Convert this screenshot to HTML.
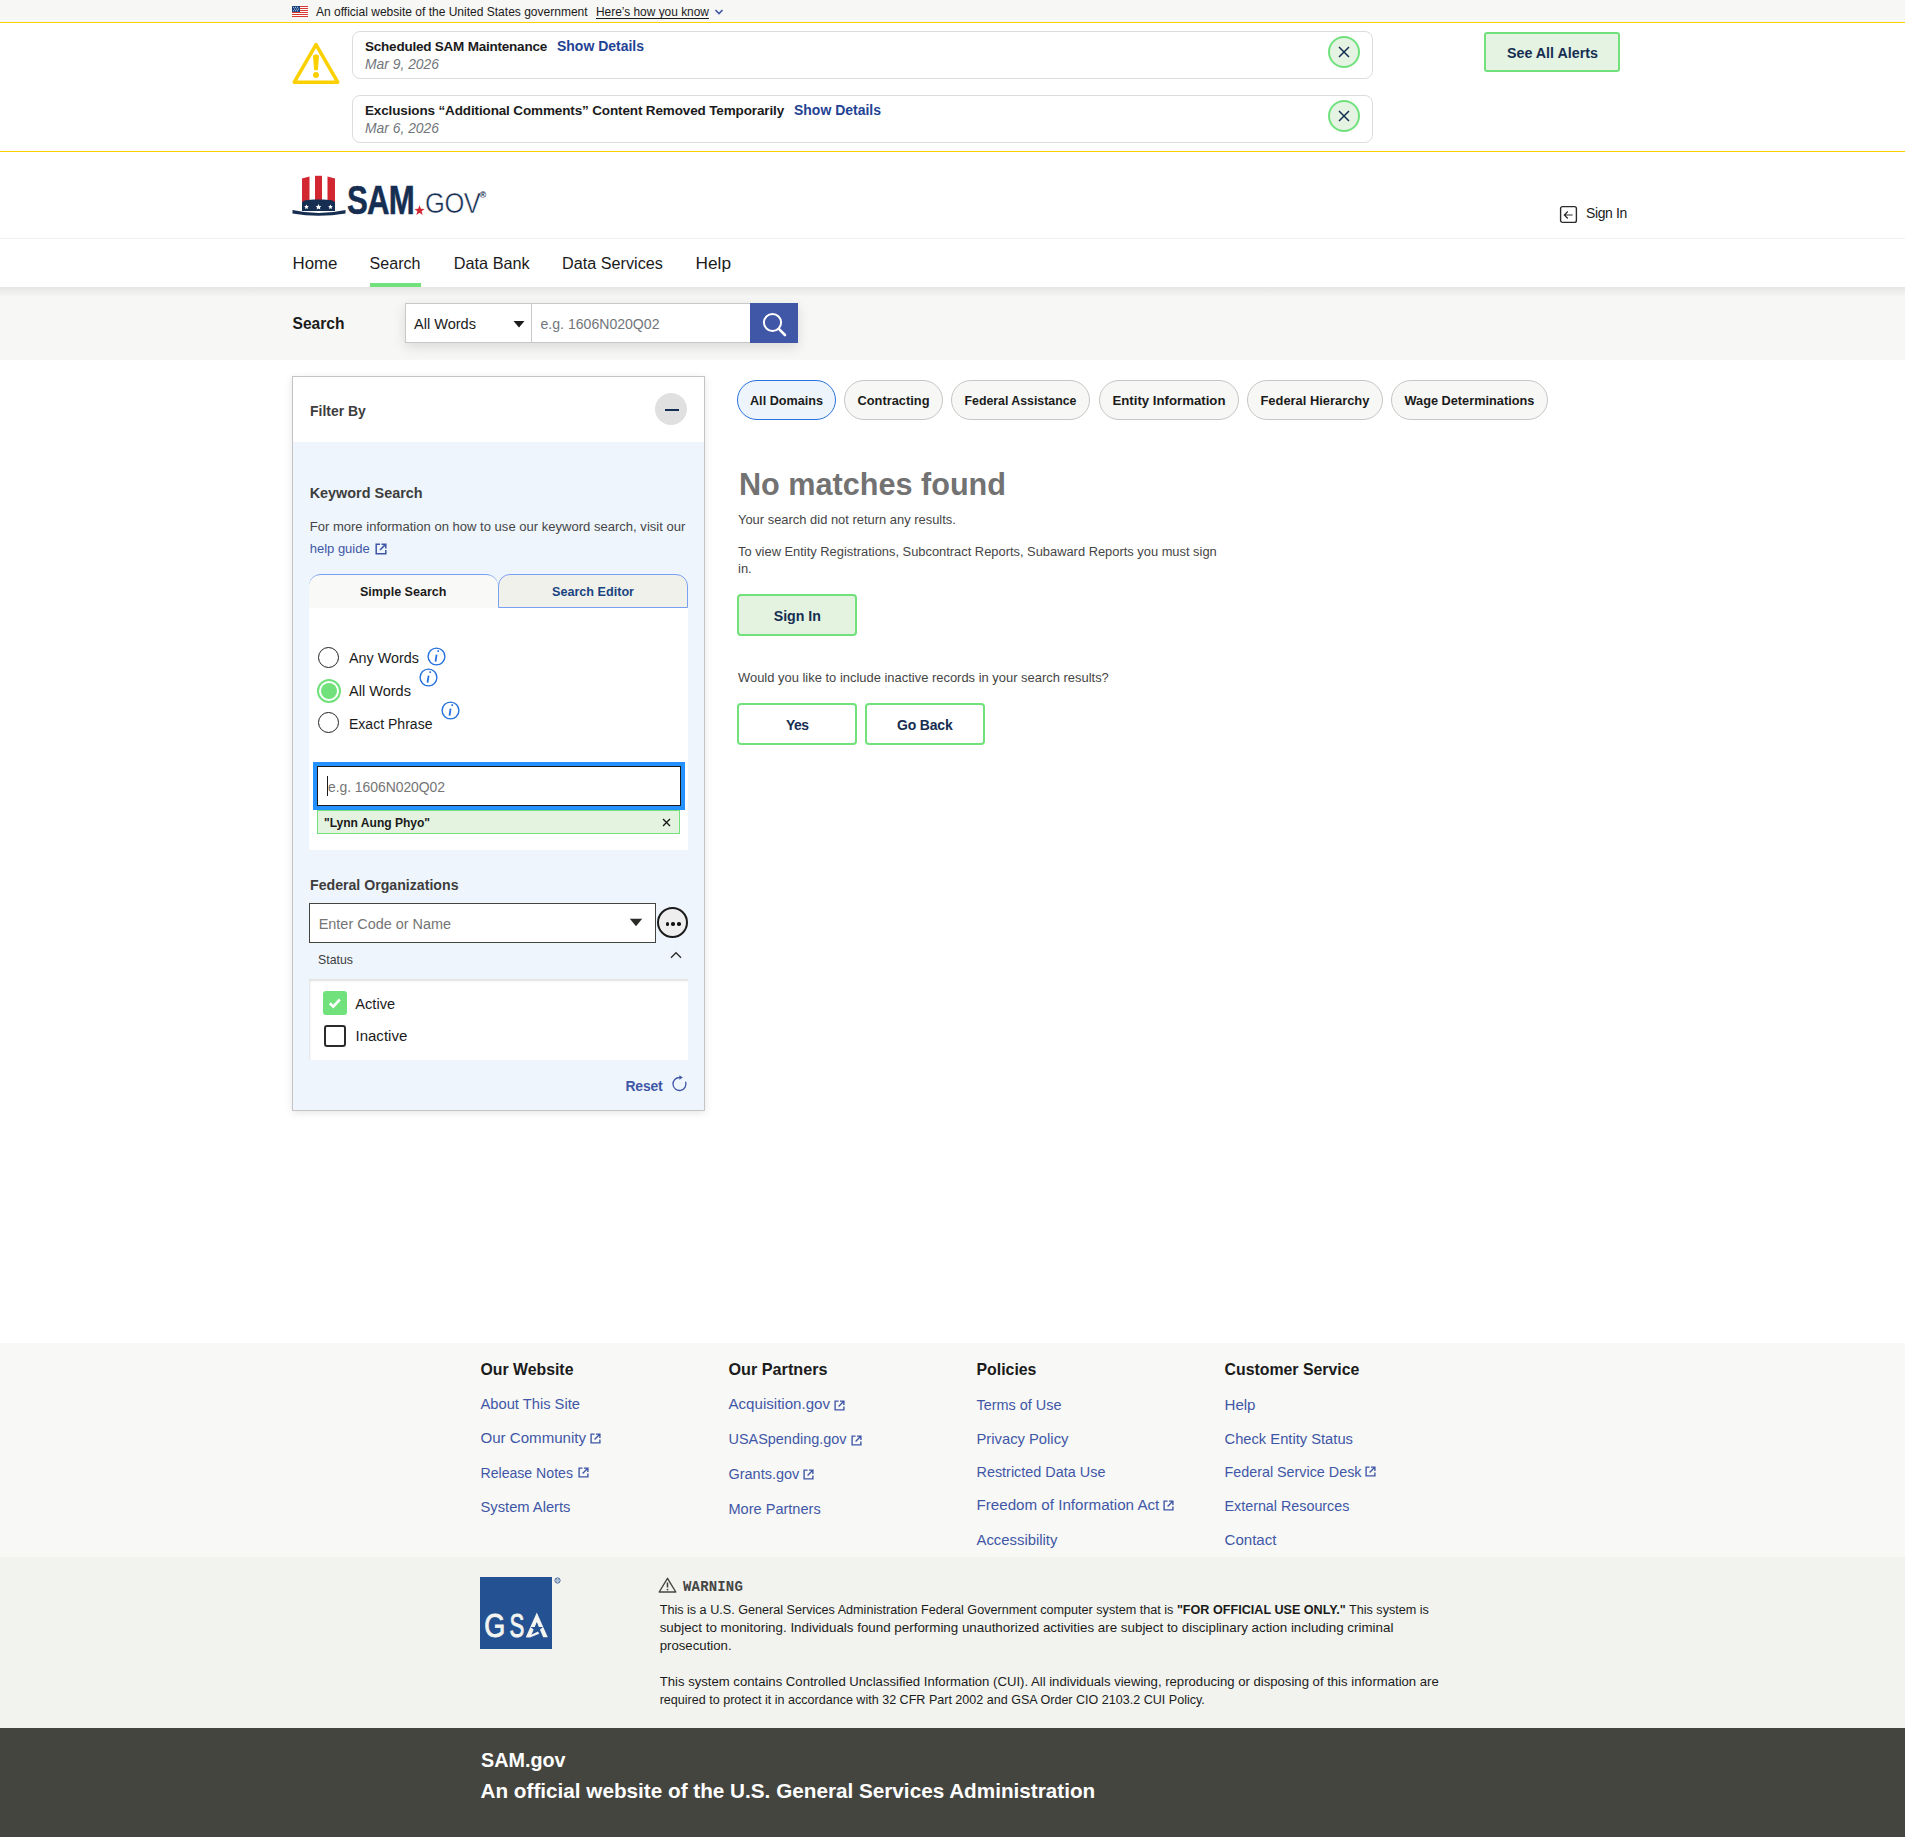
<!DOCTYPE html>
<html><head><meta charset="utf-8"><title>SAM.gov Search</title>
<style>
html,body{margin:0;padding:0;width:1905px;height:1837px;overflow:hidden;background:#fff}
body{position:relative;font-family:"Liberation Sans",sans-serif}
body>div,body>svg{position:absolute}
.t{white-space:nowrap}
b{font-weight:700}
</style></head><body>
<div style="left:0px;top:0px;width:1905px;height:22px;background:#f7f7f5"></div>
<div style="left:0px;top:22px;width:1905px;height:1px;background:#fad000"></div>
<div style="left:0px;top:151px;width:1905px;height:1px;background:#fad000"></div>
<div style="left:0px;top:238px;width:1905px;height:1px;background:#f0f0ec"></div>
<div style="left:0px;top:287px;width:1905px;height:73px;background:#f7f7f5"></div>
<div style="left:0px;top:287px;width:1905px;height:10px;background:linear-gradient(#e6e6e4,rgba(247,247,245,0))"></div>
<svg style="left:292px;top:6px" width="16" height="11" viewBox="0 0 16 11"><rect width="16" height="11" fill="#fff"/><g fill="#d83933"><rect y="0" width="16" height="1"/><rect y="2" width="16" height="1"/><rect y="4" width="16" height="1"/><rect y="6" width="16" height="1"/><rect y="8" width="16" height="1"/><rect y="10" width="16" height="1"/></g><rect width="8" height="6" fill="#1a4480"/><g fill="#fff"><circle cx="1.6" cy="1.3" r=".5"/><circle cx="3.6" cy="1.3" r=".5"/><circle cx="5.6" cy="1.3" r=".5"/><circle cx="2.6" cy="3" r=".5"/><circle cx="4.6" cy="3" r=".5"/><circle cx="6.4" cy="3" r=".5"/><circle cx="1.6" cy="4.7" r=".5"/><circle cx="3.6" cy="4.7" r=".5"/><circle cx="5.6" cy="4.7" r=".5"/></g></svg>
<svg style="left:714px;top:8px" width="10" height="8" viewBox="0 0 10 8"><path d="M1.5 2 5 5.5 8.5 2" fill="none" stroke="#3f57a6" stroke-width="1.6"/></svg>
<svg style="left:292px;top:42px" width="48" height="43" viewBox="0 0 48 43"><path d="M24 2.6 2.3 40.2h43.4z" fill="none" stroke="#fad000" stroke-width="3.5" stroke-linejoin="round"/><path d="M21.6 13.6q2.4-1.6 4.8 0l-.9 14.2h-3z" fill="#fad000" stroke="#fad000" stroke-width="1" stroke-linejoin="round"/><circle cx="24" cy="33.1" r="3" fill="#fad000"/></svg>
<div style="left:352px;top:31px;width:1019px;height:46px;border:1px solid #dcdcdc;border-radius:8px;background:#fff"></div>
<div style="left:1328px;top:36px;width:28px;height:28px;border:2px solid #70e17b;border-radius:50%;background:#e4f3e2"></div>
<svg style="left:1336px;top:44px" width="16" height="16" viewBox="0 0 16 16"><path d="M3 3 13 13M13 3 3 13" stroke="#162e51" stroke-width="1.5"/></svg>
<div style="left:352px;top:95px;width:1019px;height:46px;border:1px solid #dcdcdc;border-radius:8px;background:#fff"></div>
<div style="left:1328px;top:100px;width:28px;height:28px;border:2px solid #70e17b;border-radius:50%;background:#e4f3e2"></div>
<svg style="left:1336px;top:108px" width="16" height="16" viewBox="0 0 16 16"><path d="M3 3 13 13M13 3 3 13" stroke="#162e51" stroke-width="1.5"/></svg>
<div style="left:1484px;top:32px;width:132px;height:36px;border:2px solid #70e17b;border-radius:3px;background:#e4f3e2"></div>
<svg style="left:292px;top:175px" width="54" height="42" viewBox="0 0 54 42"><g fill="#d22630"><path d="M10 3.5 17.5 1.5V28H10z"/><path d="M23 0.8h7V28h-7z"/><path d="M35.5 1.5 43 3.5V28h-7.5z"/></g><path d="M10 28c0-2.5 4-3.5 16.5-3.5S43 25.5 43 28v8H10z" fill="#162e51"/><g fill="#fff"><path d="M14.5 29.6l.7 1.5 1.6.2-1.2 1.1.3 1.6-1.4-.8-1.4.8.3-1.6-1.2-1.1 1.6-.2z"/><path d="M26.5 29.1l.9 1.8 2 .3-1.5 1.4.4 2-1.8-1-1.8 1 .4-2-1.5-1.4 2-.3z"/><path d="M38.5 29.6l.7 1.5 1.6.2-1.2 1.1.3 1.6-1.4-.8-1.4.8.3-1.6-1.2-1.1 1.6-.2z"/></g><path d="M0.5 35Q26.5 41 53.5 35V38.5Q26.5 43 0.5 38.5Z" fill="#162e51"/></svg>
<div style="left:347px;top:180px;font:700 40px/40px 'Liberation Sans',sans-serif;color:#162e51;-webkit-text-stroke:.5px #162e51;transform:scaleX(.78);transform-origin:0 0;letter-spacing:-1px">SAM</div>
<svg style="left:414px;top:205px" width="11" height="11" viewBox="0 0 10 10"><path d="M5 .3l1.2 3.2 3.4.1-2.7 2.1 1 3.3L5 7.1 2.1 9l1-3.3L.4 3.6l3.4-.1z" fill="#d22630"/></svg>
<div style="left:425px;top:188px;font:400 29.5px/30px 'Liberation Sans',sans-serif;color:#162e51;-webkit-text-stroke:.5px #fff;transform:scaleX(.865);transform-origin:0 0;letter-spacing:-.5px">GOV</div>
<div style="left:479.5px;top:191px;font:700 9px/9px 'Liberation Sans',sans-serif;color:#162e51">®</div>
<svg style="left:1559px;top:205px" width="19" height="19" viewBox="0 0 19 19"><rect x="1.6" y="1.6" width="15.8" height="15.8" rx="2" fill="none" stroke="#2b2b2b" stroke-width="1.4"/><path d="M13.6 10H5.6M8.8 6.5 5.3 10 8.8 13.5" fill="none" stroke="#2b2b2b" stroke-width="1.2"/></svg>
<div style="left:370px;top:283px;width:51px;height:4px;background:#70e17b"></div>
<div style="left:405px;top:303px;width:393px;height:40px;box-shadow:0 4px 12px rgba(0,0,0,.12)"></div>
<div style="left:405px;top:303px;width:125px;height:38px;background:#fff;border:1px solid #c8c8c8"></div>
<div style="left:532px;top:303px;width:218px;height:38px;background:#fff;border:1px solid #c8c8c8;border-left:none"></div>
<svg style="left:513px;top:320px" width="12" height="8" viewBox="0 0 12 8"><path d="M.5 1h11L6 7.5z" fill="#1b1b1b"/></svg>
<div style="left:750px;top:303px;width:48px;height:40px;background:#4056a6"></div>
<svg style="left:762px;top:312px" width="26" height="26" viewBox="0 0 26 26"><circle cx="10.5" cy="10.5" r="8.6" fill="none" stroke="#fff" stroke-width="2"/><path d="M16.8 16.8 23 23" stroke="#fff" stroke-width="2.6" stroke-linecap="round"/></svg>
<div style="left:292px;top:376px;width:411px;height:733px;border:1px solid #c4c4c4;background:#eef5fc;box-shadow:0 2px 8px rgba(0,0,0,.10)"></div>
<div style="left:293px;top:377px;width:411px;height:65px;background:#fff"></div>
<div style="left:655px;top:393px;width:32px;height:32px;background:#e0e0e0;border-radius:50%"></div>
<div style="left:665px;top:408.5px;width:14px;height:2px;background:#162e51"></div>
<svg style="left:375px;top:543px" width="12" height="12" viewBox="0 0 12 12"><path d="M5 1.2H1.2v9.6h9.6V7" fill="none" stroke="#3f57a6" stroke-width="1.5"/><path d="M6.5 1.2h4.3v4.3M10.6 1.4 5 7" fill="none" stroke="#3f57a6" stroke-width="1.5"/></svg>
<div style="left:309px;top:574px;width:189px;height:34px;background:#f9f9f7;border-top:1px solid #7aa0f2;border-top-left-radius:12px;border-top-right-radius:12px"></div>
<div style="left:498px;top:574px;width:188px;height:32px;background:#f1f1ec;border:1px solid #7aa0f2;border-top-left-radius:12px;border-top-right-radius:12px"></div>
<div style="left:309px;top:608px;width:379px;height:242px;background:#fff"></div>
<div style="left:318px;top:647px;width:19.4px;height:19.4px;border:1.8px solid #222;border-radius:50%;background:#fff"></div>
<div style="left:317px;top:679px;width:20px;height:20px;border:2px solid #70e17b;border-radius:50%;background:#fff"></div>
<div style="left:321px;top:683px;width:16px;height:16px;border-radius:50%;background:#70e17b"></div>
<div style="left:318px;top:712px;width:19.4px;height:19.4px;border:1.8px solid #222;border-radius:50%;background:#fff"></div>
<svg style="left:426.5px;top:646.5px" width="19" height="19" viewBox="0 0 19 19"><circle cx="9.5" cy="9.5" r="8.4" fill="none" stroke="#2672de" stroke-width="1.4"/><path d="M10.4 4.2h1.6" stroke="#2672de" stroke-width="1.8"/><path d="M9.6 7.6 8.5 14.6" stroke="#2672de" stroke-width="1.8"/></svg>
<svg style="left:418.5px;top:667.5px" width="19" height="19" viewBox="0 0 19 19"><circle cx="9.5" cy="9.5" r="8.4" fill="none" stroke="#2672de" stroke-width="1.4"/><path d="M10.4 4.2h1.6" stroke="#2672de" stroke-width="1.8"/><path d="M9.6 7.6 8.5 14.6" stroke="#2672de" stroke-width="1.8"/></svg>
<svg style="left:440.5px;top:700.5px" width="19" height="19" viewBox="0 0 19 19"><circle cx="9.5" cy="9.5" r="8.4" fill="none" stroke="#2672de" stroke-width="1.4"/><path d="M10.4 4.2h1.6" stroke="#2672de" stroke-width="1.8"/><path d="M9.6 7.6 8.5 14.6" stroke="#2672de" stroke-width="1.8"/></svg>
<div style="left:313px;top:762px;width:372px;height:48px;background:#2491ff"></div>
<div style="left:317px;top:766px;width:362px;height:38px;background:#fff;border:1px solid #1b1b1b"></div>
<div style="left:327px;top:776px;width:1px;height:20px;background:#1b1b1b"></div>
<div style="left:317px;top:810px;width:361px;height:22px;background:#e3f3e0;border:1px solid #70e17b"></div>
<svg style="left:662px;top:818px" width="9" height="9" viewBox="0 0 9 9"><path d="M1 1 8 8M8 1 1 8" stroke="#1b1b1b" stroke-width="1.4"/></svg>
<div style="left:309px;top:903px;width:345px;height:38px;background:#fff;border:1px solid #454540"></div>
<svg style="left:629px;top:918px" width="14" height="9" viewBox="0 0 14 9"><path d="M.8 .8h12.4L7 8.3z" fill="#2b2b28"/></svg>
<div style="left:656.5px;top:907px;width:27px;height:27px;background:#eeeeee;border:2.2px solid #1b1b1b;border-radius:50%"></div>
<div style="left:665.6px;top:922.2px;width:3.6px;height:3.6px;background:#111;border-radius:50%"></div>
<div style="left:671.4000000000001px;top:922.2px;width:3.6px;height:3.6px;background:#111;border-radius:50%"></div>
<div style="left:677.2px;top:922.2px;width:3.6px;height:3.6px;background:#111;border-radius:50%"></div>
<svg style="left:670px;top:951px" width="12" height="8" viewBox="0 0 12 8"><path d="M1 6.8 6 1.7l5 5.1" fill="none" stroke="#2b2b2b" stroke-width="1.3"/></svg>
<div style="left:309px;top:979px;width:379px;height:81px;background:#fff;box-shadow:inset 1px 2px 2px rgba(0,0,0,.12)"></div>
<div style="left:323px;top:991px;width:24px;height:24px;background:#70e17b;border-radius:3px"></div>
<svg style="left:327px;top:995px" width="16" height="16" viewBox="0 0 16 16"><path d="M2.8 8.3 6.3 11.6 12.8 4.5" fill="none" stroke="#fff" stroke-width="2.6"/></svg>
<div style="left:324px;top:1025px;width:18px;height:18px;border:2px solid #2b2b2b;border-radius:3px;background:#fff"></div>
<svg style="left:671px;top:1075px" width="17" height="17" viewBox="0 0 17 17"><path d="M8.8 2.5A6.5 6.5 0 1 0 14.6 6.8" fill="none" stroke="#3f57a6" stroke-width="1.3"/><path d="M8.4 .2 11.8 2.5 8.4 4.8z" fill="#3f57a6"/></svg>
<div style="left:737px;top:380px;width:97px;height:38px;border:1px solid #2672de;border-radius:20px;background:#edf4fb"></div>
<div style="left:844px;top:380px;width:97px;height:38px;border:1px solid #c6c6c6;border-radius:20px;background:#f7f7f5"></div>
<div style="left:951px;top:380px;width:137px;height:38px;border:1px solid #c6c6c6;border-radius:20px;background:#f7f7f5"></div>
<div style="left:1099px;top:380px;width:138px;height:38px;border:1px solid #c6c6c6;border-radius:20px;background:#f7f7f5"></div>
<div style="left:1247px;top:380px;width:134px;height:38px;border:1px solid #c6c6c6;border-radius:20px;background:#f7f7f5"></div>
<div style="left:1391px;top:380px;width:155px;height:38px;border:1px solid #c6c6c6;border-radius:20px;background:#f7f7f5"></div>
<div style="left:737px;top:594px;width:116px;height:38px;border:2px solid #70e17b;border-radius:4px;background:#e3f3e0"></div>
<div style="left:737px;top:703px;width:116px;height:38px;border:2px solid #70e17b;border-radius:4px;background:#fff"></div>
<div style="left:865px;top:703px;width:116px;height:38px;border:2px solid #70e17b;border-radius:4px;background:#fff"></div>
<div style="left:0px;top:1343px;width:1905px;height:214px;background:#f8f8f6"></div>
<div style="left:0px;top:1557px;width:1905px;height:171px;background:#f2f3ee"></div>
<div style="left:0px;top:1728px;width:1905px;height:109px;background:#454540"></div>
<svg style="left:834.4px;top:1399.5px" width="11" height="11" viewBox="0 0 12 12"><path d="M5 1.2H1.2v9.6h9.6V7" fill="none" stroke="#3f57a6" stroke-width="1.5"/><path d="M6.5 1.2h4.3v4.3M10.6 1.4 5 7" fill="none" stroke="#3f57a6" stroke-width="1.5"/></svg>
<svg style="left:590px;top:1432.5px" width="11" height="11" viewBox="0 0 12 12"><path d="M5 1.2H1.2v9.6h9.6V7" fill="none" stroke="#3f57a6" stroke-width="1.5"/><path d="M6.5 1.2h4.3v4.3M10.6 1.4 5 7" fill="none" stroke="#3f57a6" stroke-width="1.5"/></svg>
<svg style="left:578px;top:1467px" width="11" height="11" viewBox="0 0 12 12"><path d="M5 1.2H1.2v9.6h9.6V7" fill="none" stroke="#3f57a6" stroke-width="1.5"/><path d="M6.5 1.2h4.3v4.3M10.6 1.4 5 7" fill="none" stroke="#3f57a6" stroke-width="1.5"/></svg>
<svg style="left:851px;top:1434.5px" width="11" height="11" viewBox="0 0 12 12"><path d="M5 1.2H1.2v9.6h9.6V7" fill="none" stroke="#3f57a6" stroke-width="1.5"/><path d="M6.5 1.2h4.3v4.3M10.6 1.4 5 7" fill="none" stroke="#3f57a6" stroke-width="1.5"/></svg>
<svg style="left:803.4px;top:1469px" width="11" height="11" viewBox="0 0 12 12"><path d="M5 1.2H1.2v9.6h9.6V7" fill="none" stroke="#3f57a6" stroke-width="1.5"/><path d="M6.5 1.2h4.3v4.3M10.6 1.4 5 7" fill="none" stroke="#3f57a6" stroke-width="1.5"/></svg>
<svg style="left:1163px;top:1500px" width="11" height="11" viewBox="0 0 12 12"><path d="M5 1.2H1.2v9.6h9.6V7" fill="none" stroke="#3f57a6" stroke-width="1.5"/><path d="M6.5 1.2h4.3v4.3M10.6 1.4 5 7" fill="none" stroke="#3f57a6" stroke-width="1.5"/></svg>
<svg style="left:1365px;top:1466px" width="11" height="11" viewBox="0 0 12 12"><path d="M5 1.2H1.2v9.6h9.6V7" fill="none" stroke="#3f57a6" stroke-width="1.5"/><path d="M6.5 1.2h4.3v4.3M10.6 1.4 5 7" fill="none" stroke="#3f57a6" stroke-width="1.5"/></svg>
<svg style="left:480px;top:1577px" width="72" height="72" viewBox="0 0 72 72"><rect width="72" height="72" fill="#245192"/><g fill="#f4f4f0" stroke="#f4f4f0" stroke-width="0.9" font-family="Liberation Sans" font-size="34"><text x="4.2" y="60.2" textLength="21" lengthAdjust="spacingAndGlyphs">G</text><text x="29.4" y="60.2" textLength="14.8" lengthAdjust="spacingAndGlyphs">S</text></g><path d="M56.8 35.6 67.8 60.2h-4.6L56.8 45.2 50.4 60.2h-4.6z" fill="#f4f4f0"/><path d="M56.8 45.6l1.6 4.3 4.6.2-3.6 2.8 1.3 4.4-3.9-2.5-3.9 2.5 1.3-4.4-3.6-2.8 4.6-.2z" fill="#245192"/><path d="M46 60.2 58 54.5l1.2 2.3-8.6 3.4z" fill="#f4f4f0"/></svg>
<svg style="left:554px;top:1577px" width="7" height="7" viewBox="0 0 7 7"><circle cx="3.5" cy="3.5" r="2.6" fill="none" stroke="#245192" stroke-width=".9"/><text x="3.5" y="5" font-size="4" text-anchor="middle" fill="#245192" font-family="Liberation Sans">R</text></svg>
<svg style="left:658px;top:1577px" width="19" height="16" viewBox="0 0 19 16"><path d="M9.5 1.3 1.2 15h16.6z" fill="none" stroke="#454545" stroke-width="1.4" stroke-linejoin="round"/><path d="M9.5 5.5v5" stroke="#454545" stroke-width="1.6"/><circle cx="9.5" cy="12.6" r=".9" fill="#454545"/></svg>
<div class="t" style="left:316px;top:6.00px;font-size:12.03px;line-height:12.03px;font-weight:400;color:#1b1b1b;">An official website of the United States government</div>
<div class="t" style="left:596px;top:7.01px;font-size:11.91px;line-height:11.91px;font-weight:400;color:#1b1b1b;text-decoration:underline;text-underline-offset:2px">Here’s how you know</div>
<div class="t" style="left:365px;top:40.00px;font-size:13.49px;line-height:13.49px;font-weight:700;color:#1b1b1b;letter-spacing:-0.213px;">Scheduled SAM Maintenance</div>
<div class="t" style="left:557px;top:39.01px;font-size:13.98px;line-height:13.98px;font-weight:700;color:#1f4394;">Show Details</div>
<div class="t" style="left:365px;top:57.50px;font-size:13.86px;line-height:13.86px;font-weight:400;color:#71767a;font-style:italic">Mar 9, 2026</div>
<div class="t" style="left:365px;top:104.00px;font-size:13.49px;line-height:13.49px;font-weight:700;color:#1b1b1b;letter-spacing:-0.13px;">Exclusions “Additional Comments” Content Removed Temporarily</div>
<div class="t" style="left:794px;top:103.01px;font-size:13.98px;line-height:13.98px;font-weight:700;color:#1f4394;">Show Details</div>
<div class="t" style="left:365px;top:121.50px;font-size:13.86px;line-height:13.86px;font-weight:400;color:#71767a;font-style:italic">Mar 6, 2026</div>
<div class="t" style="left:1507px;top:45.51px;font-size:14.28px;line-height:14.28px;font-weight:700;color:#162e51;">See All Alerts</div>
<div class="t" style="left:1586px;top:207.00px;font-size:13.95px;line-height:13.95px;font-weight:400;color:#1b1b1b;letter-spacing:-0.344px;">Sign In</div>
<div class="t" style="left:292.5px;top:256.00px;font-size:16.87px;line-height:16.87px;font-weight:400;color:#1b1b1b;">Home</div>
<div class="t" style="left:369.6px;top:255.00px;font-size:16.09px;line-height:16.09px;font-weight:400;color:#1b1b1b;">Search</div>
<div class="t" style="left:453.8px;top:255.01px;font-size:16.27px;line-height:16.27px;font-weight:400;color:#1b1b1b;">Data Bank</div>
<div class="t" style="left:562px;top:255.00px;font-size:16.22px;line-height:16.22px;font-weight:400;color:#1b1b1b;">Data Services</div>
<div class="t" style="left:695.5px;top:255.01px;font-size:17.26px;line-height:17.26px;font-weight:400;color:#1b1b1b;">Help</div>
<div class="t" style="left:292.5px;top:315.51px;font-size:15.59px;line-height:15.59px;font-weight:700;color:#1b1b1b;">Search</div>
<div class="t" style="left:414px;top:316.51px;font-size:14.55px;line-height:14.55px;font-weight:400;color:#1b1b1b;">All Words</div>
<div class="t" style="left:540.5px;top:316.50px;font-size:14.08px;line-height:14.08px;font-weight:400;color:#71767a;">e.g. 1606N020Q02</div>
<div class="t" style="left:310px;top:405.00px;font-size:13.95px;line-height:13.95px;font-weight:700;color:#3d3d3d;">Filter By</div>
<div class="t" style="left:309.7px;top:485.71px;font-size:14.42px;line-height:14.42px;font-weight:700;color:#3d3d3d;">Keyword Search</div>
<div class="t" style="left:309.7px;top:519.51px;font-size:13.06px;line-height:13.06px;font-weight:400;color:#454545;">For more information on how to use our keyword search, visit our</div>
<div class="t" style="left:309.7px;top:541.71px;font-size:13.0px;line-height:13.0px;font-weight:400;color:#3f57a6;">help guide</div>
<div class="t" style="left:360px;top:586.41px;font-size:12.55px;line-height:12.55px;font-weight:700;color:#1b1b1b;">Simple Search</div>
<div class="t" style="left:552px;top:585.80px;font-size:12.61px;line-height:12.61px;font-weight:700;color:#1a4480;">Search Editor</div>
<div class="t" style="left:349px;top:650.70px;font-size:14.37px;line-height:14.37px;font-weight:400;color:#1b1b1b;">Any Words</div>
<div class="t" style="left:349px;top:683.71px;font-size:14.55px;line-height:14.55px;font-weight:400;color:#1b1b1b;">All Words</div>
<div class="t" style="left:349px;top:716.70px;font-size:14.04px;line-height:14.04px;font-weight:400;color:#1b1b1b;">Exact Phrase</div>
<div class="t" style="left:328px;top:780.61px;font-size:13.95px;line-height:13.95px;font-weight:400;color:#757575;letter-spacing:-0.05px;">e.g. 1606N020Q02</div>
<div class="t" style="left:324px;top:817.00px;font-size:12.09px;line-height:12.09px;font-weight:700;color:#1b1b1b;letter-spacing:-0.032px;">&quot;Lynn Aung Phyo&quot;</div>
<div class="t" style="left:310px;top:878.01px;font-size:14.15px;line-height:14.15px;font-weight:700;color:#3d3d3d;">Federal Organizations</div>
<div class="t" style="left:318.7px;top:916.70px;font-size:14.45px;line-height:14.45px;font-weight:400;color:#757575;">Enter Code or Name</div>
<div class="t" style="left:318px;top:954.01px;font-size:12.34px;line-height:12.34px;font-weight:400;color:#3d3d3d;">Status</div>
<div class="t" style="left:355.3px;top:996.81px;font-size:14.61px;line-height:14.61px;font-weight:400;color:#1b1b1b;">Active</div>
<div class="t" style="left:355.5px;top:1027.60px;font-size:15.03px;line-height:15.03px;font-weight:400;color:#1b1b1b;">Inactive</div>
<div class="t" style="left:625.5px;top:1079.72px;font-size:13.95px;line-height:13.95px;font-weight:700;color:#3f57a6;letter-spacing:-0.194px;">Reset</div>
<div class="t" style="left:750.0px;top:394.60px;font-size:12.63px;line-height:12.63px;font-weight:700;color:#1b1b1b;">All Domains</div>
<div class="t" style="left:857.5px;top:394.61px;font-size:12.83px;line-height:12.83px;font-weight:700;color:#1b1b1b;">Contracting</div>
<div class="t" style="left:964.5px;top:394.61px;font-size:12.34px;line-height:12.34px;font-weight:700;color:#1b1b1b;">Federal Assistance</div>
<div class="t" style="left:1112.5px;top:393.61px;font-size:13.21px;line-height:13.21px;font-weight:700;color:#1b1b1b;">Entity Information</div>
<div class="t" style="left:1260.5px;top:394.61px;font-size:12.9px;line-height:12.9px;font-weight:700;color:#1b1b1b;">Federal Hierarchy</div>
<div class="t" style="left:1404.5px;top:394.60px;font-size:12.76px;line-height:12.76px;font-weight:700;color:#1b1b1b;">Wage Determinations</div>
<div class="t" style="left:739px;top:469.21px;font-size:30.61px;line-height:30.61px;font-weight:700;color:#727272;">No matches found</div>
<div class="t" style="left:738px;top:514.01px;font-size:12.93px;line-height:12.93px;font-weight:400;color:#454545;">Your search did not return any results.</div>
<div class="t" style="left:738px;top:545.81px;font-size:12.88px;line-height:12.88px;font-weight:400;color:#454545;">To view Entity Registrations, Subcontract Reports, Subaward Reports you must sign</div>
<div class="t" style="left:738px;top:562.40px;font-size:13px;line-height:13px;font-weight:400;color:#454545;">in.</div>
<div class="t" style="left:773.7px;top:609.00px;font-size:14.19px;line-height:14.19px;font-weight:700;color:#162e51;">Sign In</div>
<div class="t" style="left:738px;top:672.00px;font-size:12.94px;line-height:12.94px;font-weight:400;color:#454545;">Would you like to include inactive records in your search results?</div>
<div class="t" style="left:786px;top:718.61px;font-size:13.95px;line-height:13.95px;font-weight:700;color:#162e51;letter-spacing:-0.51px;">Yes</div>
<div class="t" style="left:897px;top:718.61px;font-size:13.95px;line-height:13.95px;font-weight:700;color:#162e51;letter-spacing:-0.15px;">Go Back</div>
<div class="t" style="left:480.5px;top:1362.01px;font-size:15.84px;line-height:15.84px;font-weight:700;color:#1b1b1b;">Our Website</div>
<div class="t" style="left:728.5px;top:1361.00px;font-size:16.19px;line-height:16.19px;font-weight:700;color:#1b1b1b;">Our Partners</div>
<div class="t" style="left:976.5px;top:1362.00px;font-size:15.87px;line-height:15.87px;font-weight:700;color:#1b1b1b;">Policies</div>
<div class="t" style="left:1224.5px;top:1362.00px;font-size:15.87px;line-height:15.87px;font-weight:700;color:#1b1b1b;">Customer Service</div>
<div class="t" style="left:480.5px;top:1397.00px;font-size:14.71px;line-height:14.71px;font-weight:400;color:#3f57a6;">About This Site</div>
<div class="t" style="left:480.5px;top:1430.02px;font-size:15.08px;line-height:15.08px;font-weight:400;color:#3f57a6;">Our Community</div>
<div class="t" style="left:480.5px;top:1465.61px;font-size:14.1px;line-height:14.1px;font-weight:400;color:#3f57a6;">Release Notes</div>
<div class="t" style="left:480.5px;top:1500.40px;font-size:14.72px;line-height:14.72px;font-weight:400;color:#3f57a6;">System Alerts</div>
<div class="t" style="left:728.5px;top:1395.61px;font-size:15.1px;line-height:15.1px;font-weight:400;color:#3f57a6;">Acquisition.gov</div>
<div class="t" style="left:728.5px;top:1431.90px;font-size:14.44px;line-height:14.44px;font-weight:400;color:#3f57a6;">USASpending.gov</div>
<div class="t" style="left:728.5px;top:1466.50px;font-size:14.47px;line-height:14.47px;font-weight:400;color:#3f57a6;">Grants.gov</div>
<div class="t" style="left:728.5px;top:1501.81px;font-size:14.55px;line-height:14.55px;font-weight:400;color:#3f57a6;">More Partners</div>
<div class="t" style="left:976.5px;top:1397.61px;font-size:14.43px;line-height:14.43px;font-weight:400;color:#3f57a6;">Terms of Use</div>
<div class="t" style="left:976.5px;top:1431.50px;font-size:14.78px;line-height:14.78px;font-weight:400;color:#3f57a6;">Privacy Policy</div>
<div class="t" style="left:976.5px;top:1464.62px;font-size:14.42px;line-height:14.42px;font-weight:400;color:#3f57a6;">Restricted Data Use</div>
<div class="t" style="left:976.5px;top:1497.00px;font-size:15.17px;line-height:15.17px;font-weight:400;color:#3f57a6;">Freedom of Information Act</div>
<div class="t" style="left:976.5px;top:1533.01px;font-size:14.87px;line-height:14.87px;font-weight:400;color:#3f57a6;">Accessibility</div>
<div class="t" style="left:1224.5px;top:1396.62px;font-size:15.07px;line-height:15.07px;font-weight:400;color:#3f57a6;">Help</div>
<div class="t" style="left:1224.5px;top:1431.51px;font-size:14.72px;line-height:14.72px;font-weight:400;color:#3f57a6;">Check Entity Status</div>
<div class="t" style="left:1224.5px;top:1464.60px;font-size:14.33px;line-height:14.33px;font-weight:400;color:#3f57a6;">Federal Service Desk</div>
<div class="t" style="left:1224.5px;top:1499.00px;font-size:14.32px;line-height:14.32px;font-weight:400;color:#3f57a6;">External Resources</div>
<div class="t" style="left:1224.5px;top:1532.01px;font-size:15.09px;line-height:15.09px;font-weight:400;color:#3f57a6;">Contact</div>
<div class="t" style="left:683px;top:1580.01px;font-size:14.04px;line-height:14.04px;font-weight:700;color:#454545;letter-spacing:0.15px;font-family:'Liberation Mono',monospace">WARNING</div>
<div class="t" style="left:659.7px;top:1604.00px;font-size:12.61px;line-height:12.61px;font-weight:400;color:#1b1b1b;">This is a U.S. General Services Administration Federal Government computer system that is <b>"FOR OFFICIAL USE ONLY."</b> This system is</div>
<div class="t" style="left:659.7px;top:1621.01px;font-size:13.37px;line-height:13.37px;font-weight:400;color:#1b1b1b;">subject to monitoring. Individuals found performing unauthorized activities are subject to disciplinary action including criminal</div>
<div class="t" style="left:659.7px;top:1639.01px;font-size:13.21px;line-height:13.21px;font-weight:400;color:#1b1b1b;">prosecution.</div>
<div class="t" style="left:659.7px;top:1675.01px;font-size:13.13px;line-height:13.13px;font-weight:400;color:#1b1b1b;">This system contains Controlled Unclassified Information (CUI). All individuals viewing, reproducing or disposing of this information are</div>
<div class="t" style="left:659.7px;top:1694.01px;font-size:12.56px;line-height:12.56px;font-weight:400;color:#1b1b1b;">required to protect it in accordance with 32 CFR Part 2002 and GSA Order CIO 2103.2 CUI Policy.</div>
<div class="t" style="left:481px;top:1751.02px;font-size:19.75px;line-height:19.75px;font-weight:700;color:#ffffff;">SAM.gov</div>
<div class="t" style="left:480.5px;top:1780.50px;font-size:20.71px;line-height:20.71px;font-weight:700;color:#ffffff;">An official website of the U.S. General Services Administration</div>
</body></html>
